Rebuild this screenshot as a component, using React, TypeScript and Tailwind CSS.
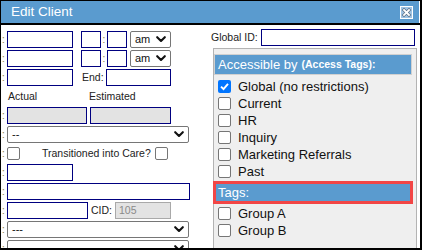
import React from "react";

const Chevron = () => (
  <svg width="10" height="7" viewBox="0 0 10 7">
    <path d="M1.2 1.2 L5 5 L8.8 1.2" stroke="#111" strokeWidth="2.1" fill="none" strokeLinecap="round" strokeLinejoin="round" />
  </svg>
);

const Colon = () => (
  <span className="w-[6px] shrink-0 pl-[1px] text-[10px] leading-none text-[#8a7a3a]">:</span>
);

const Input = ({ w, gray }: { w: string; gray?: boolean }) => (
  <div className={`${w} h-[17px] shrink-0 border border-[#000080] ${gray ? "bg-[#e3e3e3]" : "bg-white"}`} />
);

const Select = ({ w, text }: { w: string; text: string }) => (
  <div className={`${w} h-[17px] shrink-0 border border-[#767676] rounded-[2px] bg-white flex items-center justify-between pl-[4px] pr-[4px] text-[11px] text-[#111]`}>
    <span className="leading-none">{text}</span>
    <Chevron />
  </div>
);

const Box = ({ checked }: { checked?: boolean }) =>
  checked ? (
    <span className="w-[13px] h-[13px] rounded-[2px] bg-[#0075ff] flex items-center justify-center shrink-0">
      <svg width="11" height="11" viewBox="0 0 11 11">
        <path d="M2 5.6 L4.5 8 L9 2.8" stroke="white" strokeWidth="1.9" fill="none" />
      </svg>
    </span>
  ) : (
    <span className="w-[13px] h-[13px] rounded-[2px] border border-[#767676] bg-white shrink-0" />
  );

const Row = ({ children }: { children: React.ReactNode }) => (
  <div className="h-[19px] shrink-0 flex items-center">{children}</div>
);

const Item = ({ label, checked }: { label: string; checked?: boolean }) => (
  <div className="h-[17px] shrink-0 flex items-center pl-[4px] gap-[7px] text-[13px] text-[#111]">
    <Box checked={checked} />
    <span className="leading-none">{label}</span>
  </div>
);

export default function App() {
  return (
    <div className="w-[422px] h-[250px] overflow-hidden bg-white font-['Liberation_Sans']">
      <div className="w-[422px] h-[250px] border-l border-t border-r-2 border-b-2 border-black flex flex-col overflow-hidden">
        <div className="h-[22px] shrink-0 bg-[#5a9bcf] border-r border-white flex items-center justify-between pl-[10px] pr-[6px]">
          <span className="text-white text-[13.5px] leading-none">Edit Client</span>
          <svg width="13" height="13" viewBox="0 0 13 13">
            <rect x="0.5" y="0.5" width="12" height="12" fill="#9fc4e4" stroke="#ffffff" />
            <path d="M4 4 L9 9 M9 4 L4 9" stroke="#5a6f86" strokeWidth="3.2" strokeLinecap="square" />
            <path d="M4 4 L9 9 M9 4 L4 9" stroke="#ffffff" strokeWidth="1.8" strokeLinecap="square" />
          </svg>
        </div>
        <div className="h-[2px] shrink-0 bg-black" />
        <div className="flex flex-1 min-h-0">
          <div className="w-[204px] shrink-0 pt-[5px] flex flex-col text-[10.5px] text-[#222]">
            <Row>
              <Colon />
              <Input w="w-[66px]" />
              <div className="w-[8px] shrink-0" />
              <Input w="w-[20px]" />
              <span className="w-[6px] shrink-0 text-center text-[10px] text-[#8a7a3a]">:</span>
              <Input w="w-[20px]" />
              <div className="w-[3px] shrink-0" />
              <Select w="w-[41px]" text="am" />
            </Row>
            <Row>
              <Colon />
              <Input w="w-[66px]" />
              <div className="w-[8px] shrink-0" />
              <Input w="w-[20px]" />
              <span className="w-[6px] shrink-0 text-center text-[10px] text-[#8a7a3a]">:</span>
              <Input w="w-[20px]" />
              <div className="w-[3px] shrink-0" />
              <Select w="w-[41px]" text="am" />
            </Row>
            <Row>
              <Colon />
              <Input w="w-[66px]" />
              <span className="w-[33px] shrink-0 pl-[9px]">End:</span>
              <Input w="w-[65px]" />
            </Row>
            <Row>
              <span className="w-[88px] shrink-0 pl-[7px]">Actual</span>
              <span>Estimated</span>
            </Row>
            <Row>
              <Colon />
              <Input w="w-[80px]" gray />
              <div className="w-[3px] shrink-0" />
              <Input w="w-[81px]" gray />
            </Row>
            <Row>
              <Colon />
              <Select w="w-[182px]" text="--" />
            </Row>
            <Row>
              <Colon />
              <Box />
              <span className="w-[135px] shrink-0 pl-[22px]">Transitioned into Care?</span>
              <Box />
            </Row>
            <Row>
              <Colon />
              <Input w="w-[66px]" />
            </Row>
            <Row>
              <Colon />
              <Input w="w-[183px]" />
            </Row>
            <Row>
              <Colon />
              <Input w="w-[81px]" />
              <span className="w-[27px] shrink-0 pl-[3px]">CID:</span>
              <div className="w-[56px] h-[17px] shrink-0 border border-[#a9a9a9] bg-[#e3e3e3] flex items-center pl-[3px] text-[#8a8a8a]">105</div>
            </Row>
            <Row>
              <Colon />
              <Select w="w-[182px]" text="---" />
            </Row>
            <Row>
              <Colon />
              <Select w="w-[182px]" text="" />
            </Row>
          </div>
          <div className="flex-1 flex flex-col pl-[6px] pt-[4px]">
            <div className="h-[17px] shrink-0 flex items-center text-[10.5px] text-[#222]">
              <span className="w-[50px] shrink-0">Global ID:</span>
              <Input w="w-[154px]" />
            </div>
            <div className="mt-[2px] ml-[2px] w-[204px] h-[220px] shrink-0 border border-[#b3b3b3] bg-[#efefef] pt-[5px]">
              <div className="w-[198px] h-[21px] border border-[#d0d0d0] bg-[#5a9bcf] flex items-center pl-[3px] text-white">
                <span className="text-[13px] leading-none">Accessible by</span>
                <span className="text-[10.5px] font-bold leading-none ml-[4px]">(Access Tags):</span>
              </div>
              <div className="pt-[3px]">
                <Item label="Global (no restrictions)" checked />
                <Item label="Current" />
                <Item label="HR" />
                <Item label="Inquiry" />
                <Item label="Marketing Referrals" />
                <Item label="Past" />
              </div>
              <div className="mt-[2px] w-[198px] h-[21px] border border-[#d0d0d0] bg-[#5a9bcf] flex items-center pl-[3px] text-white outline-[3px] outline-solid outline-[#f24646] -outline-offset-2">
                <span className="text-[13px] leading-none">Tags:</span>
              </div>
              <div className="pt-[2px]">
                <Item label="Group A" />
                <Item label="Group B" />
              </div>
            </div>
          </div>
        </div>
      </div>
    </div>
  );
}
